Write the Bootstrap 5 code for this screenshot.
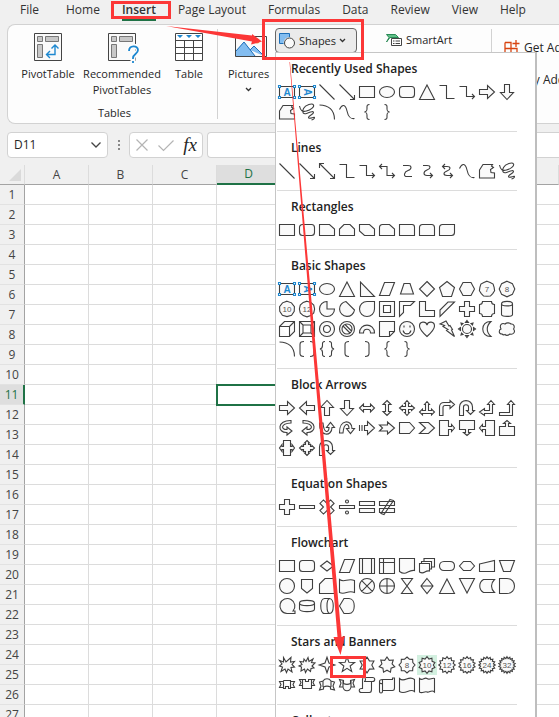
<!DOCTYPE html>
<html lang="en">
<head>
<meta charset="utf-8">
<meta name="viewport" content="width=device-width, initial-scale=1">
<title>Spreadsheet – Insert shapes</title>
<link href="https://cdn.jsdelivr.net/npm/bootstrap@5.3.0/dist/css/bootstrap.min.css" rel="stylesheet">
<style>
  :root { --ink:#262626; --chrome:#f0f0f0; --rule:#d2d2d2; --green:#1f7246; --blue:#1e88d0; --note:#fc3737; }
  body { font-family:"Open Sans","Noto Sans",sans-serif; font-size:11px; line-height:16px; color:var(--ink); background:var(--chrome); height:100vh; overflow:hidden; }
  button { color:inherit; background:none; border:0; padding:0; }
  svg { display:block; overflow:visible; }
  .tabs { height:24px; padding-left:20px; gap:22px; font-size:12px; line-height:20px; }
  .tabs a { color:#333; text-decoration:none; height:21px; white-space:nowrap; }
  .tabs a:first-child { margin-right:5px; }
  .tabs a.current { font-weight:600; border-bottom:2px solid var(--green); }
  .ribbon { margin-left:7px; height:100px; background:#fdfdfd; border:1px solid var(--rule); border-right:0; border-radius:8px 0 0 8px; }
  .group-tables { width:209px; }
  .tools { padding:8px 0 0 13px; height:80px; }
  .tool { display:flex; flex-direction:column; align-items:center; gap:5px; text-align:center; }
  .tool-a { width:54px; } .tool-b { width:94px; } .tool-c { width:40px; }
  .rule { width:1px; height:90px; margin-top:4px; background:var(--rule); }
  .group-pics { width:57px; padding:8px 0 0 10px; }
  .shapes-btn { width:82px; height:25px; margin-top:3px; padding:0 6px 0 3px; gap:3px; border:1px solid #666; border-radius:4px; background:#ebebeb; }
  .smart { width:134px; padding:7px 0 0 29px; }
  .smart button { gap:3px; }
  .addins { padding:15px 0 0 12px; white-space:nowrap; font-size:12px; gap:16px; }
  .addins button { gap:4px; }
  .addins span { padding-left:19px; }
  .formula { padding:8px 0 7px 7px; height:41px; }
  .field { height:26px; background:#fff; border:1px solid var(--rule); border-radius:4px; }
  .namebox { width:101px; padding:0 6px; }
  .namebox input { width:70px; border:0; outline:0; padding:0; font-size:12px; color:var(--ink); background:transparent; }
  .dots { width:21px; }
  .fx { width:74px; margin-right:4px; padding:0 5px 0 6px; }
  .fx-text { font:italic 19px/22px "Liberation Serif",serif; }
  .bar { border-right:0; border-radius:4px 0 0 4px; outline:0; min-width:0; }
  .sheet { table-layout:fixed; width:100%; border-collapse:separate; border-spacing:0; font-size:12px; line-height:18px; color:#444; }
  .sheet th, .sheet td { height:20px; padding:0; font-weight:400; text-align:center; }
  .sheet tbody th { padding-top:1px; }
  .sheet col { width:64px; } .sheet col.nums { width:25px; } .sheet col.rest { width:auto; }
  .sheet td { background:#fff; border-right:1px solid #dcdcdc; border-bottom:1px solid #dcdcdc; }
  .sheet td:last-child { border-right:0; }
  .sheet thead th { border-bottom:1px solid #a3a3a3; border-right:1px solid #dcdcdc; }
  .sheet tbody th { border-right:1px solid #a3a3a3; border-bottom:1px solid #e2e2e2; }
  .sheet thead th.on { background:#dedede; color:var(--green); border-bottom:2px solid var(--green); }
  .sheet tbody th.on { background:#dedede; color:var(--green); border-right:2px solid var(--green); }
  .sheet td.on { outline:2px solid var(--green); position:relative; outline-offset:-1px; }
  .gallery { position:absolute; left:275px; top:52px; width:262px; bottom:-30px; background:#fff; padding-left:1px; border:1px solid #c6c6c6; border-right:2px solid #bebebe; z-index:2; overflow:hidden; }
  .gallery section { width:240px; border-bottom:1px solid #dcdcdc; padding-bottom:9px; }
  .gallery h2 { margin:0; padding:6px 0 3px 14px; font-size:12px; line-height:20px; font-weight:600; color:#222; white-space:nowrap; }
  .gallery button { width:20px; height:20px; padding:1px; }
  .gallery button.hot { background:#d3f0e0; }
  .gallery svg { width:18px; height:18px; fill:#fafafa; stroke:#3f3f3f; stroke-width:1.1; }
  .gallery .open { fill:none; }
  .gallery text { fill:#555; stroke:none; font:8px "Liberation Sans",sans-serif; text-anchor:middle; }
  .gallery .tb .grip { fill:#fff; stroke:var(--blue); }
  .gallery .tb text { fill:var(--blue); font-weight:700; font-size:10px; }
  .notes { position:absolute; left:0; top:0; z-index:3; pointer-events:none; }
</style>
</head>
<body class="d-flex flex-column position-relative">
<nav class="tabs d-flex flex-shrink-0">
  <a href="#">File</a><a href="#">Home</a><a href="#" class="current">Insert</a><a href="#">Page Layout</a><a href="#">Formulas</a><a href="#">Data</a><a href="#">Review</a><a href="#">View</a><a href="#">Help</a>
</nav>

<div class="ribbon d-flex flex-shrink-0 overflow-hidden">
  <div class="group-tables flex-shrink-0">
    <div class="tools d-flex">
      <button class="tool tool-a"><svg width="28" height="28" fill="none" stroke="#444"><path fill="#fafafa" d="M.5.5h27v27H.5z"/><path fill="#c8c8c8" stroke="#777" d="M3.5 3.5h5v5h-5zM11.500 3.500h13v5h-13zM3.500 11.500h5v13h-5z"/><path stroke="#1e88d0" stroke-width="1.4" d="M13 21.500h8V12M16 18l-3.500 3.500L16 25M17.500 15.500L21 12l3.500 3.500"/></svg>PivotTable</button>
      <button class="tool tool-b"><svg width="28" height="28" fill="none" stroke="#444"><path fill="#fafafa" d="M.5.5h27v27H.5z"/><path fill="#c8c8c8" stroke="#777" d="M3.500 3.500h5v5h-5zM11.500 3.500h13v5h-13zM3.500 11.500h5v13h-5z"/><path stroke="#fdfdfd" stroke-width="5" d="M21 18c0-6 9-6 9-1 0 4-5 4-5 8v5"/><path stroke="#1e88d0" stroke-width="1.800" d="M21 18c0-6 9-6 9-1 0 4-5 4-5 8v1M25 28v2"/></svg>Recommended<br>PivotTables</button>
      <button class="tool tool-c"><svg width="28" height="28" fill="none" stroke="#444"><path fill="#fff" d="M.5.5h27v27H.5z"/><path d="M.500 7.500h27M.500 14.500h27M.500 20.500h27M9.500 7.500v20M18.500 7.500v20"/><path fill="#1e88d0" stroke="none" d="M2 2h6L5 5zM11 2h6l-3 3zM20 2h6l-3 3z"/></svg>Table</button>
    </div>
    <div class="text-center ps-1">Tables</div>
  </div>
  <div class="rule flex-shrink-0"></div>
  <div class="group-pics flex-shrink-0">
    <button class="tool"><svg width="28" height="28"><path fill="#fafafa" stroke="#444" d="M.500 3.500h31v20H.500z"/><circle cx="22" cy="8" r="2.500" fill="#f0913a"/><path fill="#83bdf0" d="M1 18l8-9 11 14H1z"/><path fill="#83bdf0" stroke="#1e6fb8" d="M1 18l8-9 11 14M15 17l4-4 10 10"/></svg>Pictures<svg width="7" height="5" fill="none" stroke="#333" stroke-width="1.300"><path d="M1 1l2.500 2.500L6 1"/></svg></button>
  </div>
  <button class="shapes-btn d-flex align-items-center flex-shrink-0"><svg width="17" height="16"><path fill="#83bdf0" stroke="#1e6fb8" d="M.500.500h10v10H.500z"/><circle cx="10.500" cy="10" r="6" fill="#ebebeb"/><circle cx="10.500" cy="10" r="5" fill="#fafafa" stroke="#444"/></svg>Shapes<svg width="7" height="5" fill="none" stroke="#333" stroke-width="1.300"><path d="M1 1l2.500 2.500L6 1"/></svg></button>
  <div class="smart flex-shrink-0"><button class="d-flex align-items-center"><svg width="17" height="14"><path fill="#5fbf87" stroke="#2b8a57" d="M.500 1.500h9l3 3H4L.500 9 3 4.500z"/><path fill="#fff" stroke="#444" d="M5.500 5.500h10v7h-10z"/><path stroke="#444" d="M7 8h1.500M9.500 8H14M7 10.500h1.500M9.500 10.500H14"/></svg>SmartArt</button></div>
  <div class="rule flex-shrink-0"></div>
  <div class="addins d-flex flex-column"><button class="d-flex align-items-center"><svg width="16" height="16" fill="none" stroke="#d8430f" stroke-width="1.300"><path d="M1 2.500h6v12M1 2.500v12h12v-6H1M12 0v7M8.500 3.500h7"/></svg>Get Add-ins</button><button class="d-flex"><span>My Add-ins</span></button></div>
</div>

<div class="formula d-flex flex-shrink-0">
  <div class="field namebox d-flex align-items-center justify-content-between flex-shrink-0"><input aria-label="Name box" value="D11"><svg width="10" height="6" fill="none" stroke="#444" stroke-width="1.300"><path d="M.500.500L5 5 9.500.500"/></svg></div>
  <div class="dots d-flex align-items-center justify-content-center flex-shrink-0"><svg width="2" height="11" fill="#888"><path d="M0 0h2v2H0zM0 4h2v2H0zM0 8h2v2H0z"/></svg></div>
  <div class="field fx d-flex align-items-center justify-content-between flex-shrink-0">
    <button aria-label="Cancel"><svg width="12" height="12" stroke="#b4b4b4" stroke-width="1.200"><path d="M.500.500l11 11M11.500.500l-11 11"/></svg></button>
    <button aria-label="Enter"><svg width="16" height="11" fill="none" stroke="#b4b4b4" stroke-width="1.200"><path d="M.500 5.500l5 5L15.500.500"/></svg></button>
    <button class="fx-text">fx</button>
  </div>
  <input class="field bar flex-grow-1" aria-label="Formula">
</div>

<table class="sheet flex-shrink-0">
  <colgroup><col class="nums"><col><col><col><col><col><col><col><col><col class="rest"></colgroup>
  <thead><tr><th><svg width="24" height="18"><path d="M21 3v12H9z" fill="#dadada"/></svg></th><th>A</th><th>B</th><th>C</th><th class="on">D</th><th></th><th></th><th></th><th></th><th></th></tr></thead>
  <tbody id="rows"></tbody>
</table>

<div class="gallery" role="menu">
  <section><h2>Recently Used Shapes</h2><div class="d-flex flex-wrap" data-shapes="tb tbv line lineA rect oval round tri elbow elbowA arrow arrow/90 free scrib arc wave brace brace/180"></div></section>
  <section><h2>Lines</h2><div class="d-flex flex-wrap" data-shapes="line lineA lineAA elbow elbowA elbowAA curve curveA curveAA wave free scrib"></div></section>
  <section><h2>Rectangles</h2><div class="d-flex flex-wrap" data-shapes="rect round snip1 snip2 snipD snipR rnd1 rnd2 rndD"></div></section>
  <section><h2>Basic Shapes</h2><div class="d-flex flex-wrap" data-shapes="tb tbv oval tri rtri para trap diam pent hex n7 n8 n10 n12 pie chord tear frame half ell stripe plus plaque can cube bevel donut no barc fold smile heart bolt sun moon cloud arc brk2 brc2 brk brk/180 brace brace/180"></div></section>
  <section><h2>Block Arrows</h2><div class="d-flex flex-wrap" data-shapes="arrow arrow/180 arrow/270 arrow/90 lr lr/90 quad lru bent uturn leftup bentup curlR curlL swoopU swoop strip notch penta chev call call/90 call/180 call/270 callLR callQ uturn"></div></section>
  <section><h2>Equation Shapes</h2><div class="d-flex flex-wrap" data-shapes="plus minus plus/45 div eq neq"></div></section>
  <section><h2>Flowchart</h2><div class="d-flex flex-wrap" data-shapes="rect round fdiam para pre inter doc docs term fhex minp mop circ off card tape sumj or coll sort tri tri/180 stored delay seq disk drum disp"></div></section>
  <section><h2>Stars and Banners</h2><div class="d-flex flex-wrap" data-shapes="ex1 ex2 s4 s5 s6 s7 k8 k10 k12 k16 k24 k32 rib1 rib2 rib3 rib4 scrV scrH wav1 wav2"></div></section>
  <section><h2>Callouts</h2></section>
</div>

<svg class="notes" width="559" height="717" fill="none" stroke="#fc3737" stroke-width="3" aria-hidden="true">
  <path d="M112.500 2.500h57v15h-57zM263.500 20.500h99v38h-99zM331.500 657.500h33v19h-33z"/>
  <path fill="#fc3737" stroke="none" d="M166 26l86 9.500 0-1.500 10 7.500-11 3 1-3zM289.500 62l.500 0 27 300L341.500 637l3.500-1-4.500 19-7-18 4 0L314 362z"/>
</svg>

<script>
// Closed polygon with n spikes alternating between radii R and r around the icon centre.
function star(n, R, r) {
  let d = '';
  for (let i = 0; i < 2 * n; i++) {
    const a = Math.PI * i / n - Math.PI / 2, q = i % 2 ? r : R;
    d += (i ? 'L' : 'M') + (9 + q * Math.cos(a)).toFixed(2) + ' ' + (9 + q * Math.sin(a)).toFixed(2);
  }
  return d + 'z';
}
const circle = r => `M${9 - r} 9a${r} ${r} 0 1 0 ${2 * r} 0a${r} ${r} 0 1 0-${2 * r} 0z`;
// Paths in an 18-unit box; a leading ~ marks an unfilled line.
const shapes = {
  line:'~M1.5 1.5l15 15', lineA:'~M1.5 1.5l15 15M16.5 12v4.500H12', lineAA:'~M1.5 1.5l15 15M16.5 12v4.500H12M6 1.500H1.500V6',
  rect:'M1.5 3.5h15v11h-15z', oval:'M1.5 9a7.500 5.500 0 1 0 15 0a7.500 5.500 0 1 0-15 0z',
  round:'M4.500 3.500h9a3 3 0 0 1 3 3v5a3 3 0 0 1-3 3h-9a3 3 0 0 1-3-3v-5a3 3 0 0 1 3-3z',
  tri:'M9 2l7.500 14.500h-15z', elbow:'~M1.500 2.500h7v13h8', elbowA:'~M1.500 3.500h7v10h8M14 11l2.500 2.500L14 16',
  elbowAA:'~M2 4.500h7v9h7.500M14 11l2.500 2.500L14 16M4 2L1.500 4.500 4 7',
  arrow:'M1.500 6.500h8v-4l7 6.500-7 6.500v-4h-8z', free:'M1.500 8L5 2.500h9.500L13.500 4l2 1.500-3 2 .500 3 3.500.500v5h-15z',
  scrib:'~M1.500 3c1 5 3 6 7 5s8-4 7-6-8-.500-10 3.500 0 6 3 5 7-3 7-1-5 3-5 5 6-1 6 0-1 2-3 2.500', arc:'~M1.500 2c9 0 15 5 15 14.500',
  wave:'~M1.500 6.500C4 1 7.500 1 9 8s4 8 7.500 7.500', brace:'~M11.500 1.500c-3 0-2.500 2-2.500 4s0 3-2.500 3.500c2.500.5 2.500 1.500 2.500 3.500s-.5 4 2.500 4',
  curve:'~M5 3.500h5c4 0 4 3.500 0 5s-5 6-1 6h5', curveA:'~M5 3.500h4c4 0 4 3 0 4.500s-4 5.500 0 5.500h5M12 11l2.500 2.500L12 16',
  curveAA:'~M5 4.500h4c4 0 4 3 0 4.500s-4 4.500 0 4.500h5M12 11l2.500 2.500L12 16M7 2L4.500 4.500 7 7',
  snip1:'M1.500 3.500h10l5 4.500v6.500h-15z', snip2:'M1.500 14.500V8L6 3.500h6L16.500 8v6.500z', snipD:'M1.500 3.500h10l5 4.500v6.500h-10l-5-4.500z',
  snipR:'M4.500 3.500h7l5 4.500v6.500h-15v-8a3 3 0 0 1 3-3z', rnd1:'M1.500 3.500h12.500a2.500 2.500 0 0 1 2.500 2.500v8.500h-15z',
  rnd2:'M4.500 3.500h9a3 3 0 0 1 3 3v8h-15v-8a3 3 0 0 1 3-3z', rndD:'M4.500 3.500h12v8a3 3 0 0 1-3 3h-12v-8a3 3 0 0 1 3-3z',
  rtri:'M2.500 2v14.500h14z', para:'M6.500 2.500h10l-5 13h-10z', trap:'M6 3.500h6l3.500 10.500h-13z', diam:'M9 1.500l7.500 7.500L9 16.500 1.500 9z',
  pent:'M9 1.500l7.500 6-3 9h-9l-3-9z', hex:'M5 2.500h8L16.500 9 13 15.500H5L1.500 9z',
  pie:'M9 1.500a7.500 7.500 0 1 0 7.500 7.500H9z', chord:'M8 1.500a7.500 7.500 0 1 0 8.500 8.500z', tear:'M16.500 1.500v7.500A7.500 7.500 0 1 1 9 1.500z',
  frame:'M1.500 1.500h15v15h-15zM5.500 5.500h7v7h-7z', half:'M1.500 1.500h15l-4 4h-7v7l-4 4z', ell:'M1.500 1.500h6v9h9v6h-15z', stripe:'M10 2h6.500L2 16.500V10z',
  plus:'M6.500 1.500h5v5h5v5h-5v5h-5v-5h-5v-5h5z', plaque:'M4.500 1.500h9c0 2 1 3 3 3v9c-2 0-3 1-3 3h-9c0-2-1-3-3-3v-9c2 0 3-1 3-3z',
  can:'M3.500 4c0-3.500 11-3.500 11 0v10.500c0 2.500-11 2.500-11 0zM3.500 4c0 2.500 11 2.500 11 0', cube:'M1.500 6.500l5-5h10v10l-5 5h-10zM1.500 6.500h10v10M11.500 6.500l5-5',
  bevel:'M1.500 1.500h15v15h-15zM5 5h8v8H5zM1.500 1.500L5 5M16.500 1.500L13 5M16.500 16.500L13 13M1.500 16.500L5 13',
  donut:circle(7.5) + circle(3.5), no:circle(7.5) + circle(5) + 'M5 6l7 7M7 4.500l6.500 6.500', barc:'M1.500 13c0-10.500 15-10.500 15 0h-4c0-5-7-5-7 0z',
  fold:'M1.500 1.500h15v10l-5 5h-10zM11.500 16.500v-5h5', smile:circle(7.5) + 'M5 10.500c1.500 4.500 6.500 4.500 8 0M6 5.500v2M12 5.500v2',
  heart:'M9 16.500C4 12 1.500 9 1.500 6 1.500 1 8 1 9 5c1-4 7.500-4 7.500 1 0 3-2.500 6-7.500 10.500z', bolt:'M2 4l6-3 3 5 1-.500 2.500 4-1 .5 3 6.500-8-6 1.500-1-5-3 1.500-1z',
  sun:circle(4.500) + 'M9 .500l1.500 2h-3zM9 17.500l1.500-2h-3zM.500 9l2-1.500v3zM17.500 9l-2-1.500v3zM3 3l2 .500-1.500 1.500zM15 3l-2 .500 1.500 1.500zM3 15l2-.500-1.500-1.500zM15 15l-2-.500 1.500-1.500z',
  moon:'M13 1.500C2 1 2 17 13 16.500 8 12 8 6 13 1.500z', cloud:'M4 14c-4 0-3-4.500-1-5-2-4 1-6.500 4-5 2-2 5-1 6 0 3-.500 4 3 2.500 5 2.500 3-.500 6-3.500 5-2 1.500-4 1.500-5 .500-1 .500-2 .500-3-.500z',
  brk2:'~M6 1.500c-3 0-4 1-4 3v9c0 2 1 3 4 3M12 1.500c3 0 4 1 4 3v9c0 2-1 3-4 3', brc2:'~M7 1.500c-3 0-2.500 2-2.500 4S4 8.500 2 9c2 .5 2.500 1.500 2.500 3.500s-.5 4 2.500 4M11 1.500c3 0 2.500 2 2.500 4s.5 3 2.500 3.500c-2 .5-2.500 1.500-2.500 3.500s.5 4-2.500 4',
  brk:'~M11 1.500c-3 0-4 1-4 3v9c0 2 1 3 4 3',
  lr:'M1.500 9l4-4v2.500h7V5l4 4-4 4v-2.500h-7V13z', quad:'M9 1.500L11.500 4.500h-1v3h3v-1L16.500 9l-3 2.500v-1h-3v3h1L9 16.500l-2.500-3h1v-3h-3v1L1.500 9l3-2.500v1h3v-3h-1z',
  lru:'M9 2.500l2.500 3h-1v6h3v-1.500l3 3-3 3v-1.500h-9V16l-3-3 3-3v1.500h3v-6h-1z', bent:'M1.500 16.500V8c0-3 2-4.500 4.500-4.500h6v-2l4.500 4-4.500 4V6.500H7C5.500 6.500 5 7 5 8.500v8z',
  uturn:'M1.500 16.500V8c0-8.500 13-8.500 13 0v3.500h2l-4 4-4-4h2V8c0-3-5-3-5 0v8.500z', leftup:'M13 1.500l3.500 4h-2v9h-8v2l-5-3.500 5-3.500v2h5v-6h-2z', bentup:'M13 1.500l3.500 4h-2v11h-13v-3h10v-8h-2z',
  curlR:'M13 1.500C-1 1-1 14 9 13.500V16l5-4-5-4v2.500C3 11 2 4.500 13 4z', curlL:'M5 1.500C19 1 19 14 9 13.500V16l-5-4 5-4v2.500C15 11 16 4.500 5 4z',
  swoop:'M1.500 14C1 0 14 0 14 9.500h2.500l-4 5-4-5H11C11 4 6 3 5 14z', swoopU:'M1.500 4C1 18 14 18 14 8.500h2.500l-4-5-4 5H11C11 14 6 15 5 4z',
  strip:'M6.500 6.500h3v-4l7 6.500-7 6.500v-4h-3zM1.500 6v6M4 6v6', notch:'M1.500 6h8V3l7 6-7 6v-3h-8l3-3z', penta:'M1.500 3.500h10L16.500 9l-5 5.500h-10z', chev:'M1.500 3.500h9l6 5.500-6 5.500h-9L7.500 9z',
  call:'M1.500 1.500h9v6h3v-2l3 3.500-3 3.500v-2h-3v6h-9z', callLR:'M5.500 1.500h7v6h1.500v-2L16.500 9 14 12.500v-2h-1.500v6h-7v-6H4v2L1.500 9 4 5.500v2h1.500z',
  callQ:'M9 1.500l2.500 2.500h-1v1.500h2v2H14v-1L16.500 9 14 11.500v-1h-1.500v2h-2V14h1L9 16.500 6.500 14h1v-1.500h-2v-2H4v1L1.500 9 4 6.500v1h1.500v-2h2V4h-1z',
  minus:'M1.500 7.500h15v3h-15z', div:'M1.500 7.500h15v3h-15zM7.500 3.500a1.500 1.500 0 1 0 3 0 1.500 1.500 0 1 0-3 0zM7.500 14.500a1.500 1.500 0 1 0 3 0 1.500 1.500 0 1 0-3 0z', eq:'M1.500 3.500h15v4h-15zM1.500 10.500h15v4h-15z',
  neq:'M1.500 3.500h15v4h-15zM1.500 10.500h15v4h-15zM12 1.500l3.500 1L6 16.500l-3-1z', fdiam:'M9 4l6.500 5L9 14 2.500 9z', pre:'M1.500 1.500h15v15h-15zM4.500 1.500v15M13.500 1.500v15', inter:'M1.500 1.500h15v15h-15zM5.500 1.500v15M1.500 5.500h15',
  doc:'M1.500 1.500h15v12c-7-1-8 6-15 1z', docs:'M1.500 6.500h10v7.500c-5-1-5 4-10 1zM3.500 6V4.500h10V12h-1.500M6 4V1.500h10.500V10H14', term:'M6 4.500h6c6 0 6 9 0 9H6c-6 0-6-9 0-9z', fhex:'M5.500 4.500h7l4 4.500-4 4.500h-7L1.500 9z',
  minp:'M1.500 7l15-3.500v11h-15z', mop:'M1.500 3.500h15l-4 11h-7z', circ:circle(7.5), off:'M3.500 2.500h11v9L9 16l-5.500-4.500z', card:'M7 1.500h9.500v15h-15V7z', tape:'M1.500 2.500c5 4 8-2 15 1v12c-7-3-9 3-15 0z',
  sumj:circle(7.5) + 'M3.700 3.700l10.600 10.600M14.300 3.700L3.700 14.300', or:circle(7.5) + 'M9 1.500v15M1.500 9h15', coll:'M3.500 1.500h11l-11 15h11z', sort:'M9 1.500l6 7.500-6 7.500L3 9zM3 9h12',
  stored:'M5.500 2.500h11c-4 4-4 9 0 13h-11c-5-3-5-10 0-13z', delay:'M1.500 1.500H9c10 0 10 15 0 15H1.500z', seq:'M15 14h2v2.500H9A7.500 7.500 0 1 1 15 14z', disk:'M1.500 6c0-3.500 15-3.500 15 0v6c0 3.500-15 3.500-15 0zM1.500 6c0 3.500 15 3.500 15 0', drum:'M6.500 1.500h5c5 0 5 15 0 15h-5c-5 0-5-15 0-15zM12 1.500c-4 0-4 15 0 15',
  disp:'M6 1.500h5c7 0 7 15 0 15H6L1.500 9z',
  ex1:'M5.500 1.500L8 6l5-4.500-.500 4.500 4-.500-2.500 3 2.500 2.500-3.500.500 1 4.500L10 13l-1.500 3.500L7 13l-4 2.500L4.500 11l-3-1L4 8 1.500 4.500l4 1.500z', ex2:'M6 3l2 2.500 2-4 1 4L15 3l-1.500 3.500 3.500.500-3 3 2 2-3 .500-.500 3L9.500 13l-2 3.500-1-3.500-3.500 2 .500-4L1 10l3-1.500L2 5.500l3.500.500z',
  s4:star(4, 7.8, 2.8), s5:star(5, 8, 3.3), s6:star(6, 8, 4.800), s7:star(7, 8, 5.200),
  rib1:'M5.500 4.500h7v7h4l-1.500-3 1.500-3h-4M5.500 5.500h-4L3 8.500l-1.500 3h4v1h2v-2h3v2h2v-1M5.500 11.500v-7', rib2:'M1.500 3.500h6v2h3v-2h6L15 6.500l1.500 3h-3v3h-9v-3h-3L3 6.500zM4.500 9.500v-6M13.500 9.500v-6',
  rib3:'M5 5c2-3 6-3 8 0l3.500 1-1.500 4 1.500 4-4-1v-2c-2-1-5-1-7 0v2l-4 1L3 10 1.500 6zM5 5v6M13 5v6', rib4:'M1.500 3.500l4 1v3c2 1 5 1 7 0v-3l4-1L15 7l1.500 4H13c-1 5-7 5-8 0H1.500L3 7zM5 11V5M13 11V5',
  scrV:'M5.500 1.500h9c3 0 3 4 0 4h-1v8c0 2-1 3-2 3h-8c-3 0-3-4 0-4h1v-9c0-1 .500-2 1.500-2zM6 5.500h8M6 1.500c2 0 2 4 0 4', scrH:'M1.500 5.500c0-2 2-2 3-2h10v-1.500h2v10c0 2-1 2.500-2 2.500h-10v1c0 2-3 2-3 0zM4.500 15V7c0 1-3 1-3-1M4.500 7v-3',
  wav1:'M1.500 2.500c5 5 9-4 15 1v12c-5-4-9 4-15 0z', wav2:'M1.500 2.500c3 3 5-2 7.500 0s5-1 7.500 0V16c-3-3-5 1-7.500 0s-5 2-7.500 0z'
};
const numbered = {
  n7:star(7, 7.8, 7.3), n8:star(4, 7.8, 7.6), n10:star(5, 7.8, 7.6), n12:star(6, 7.8, 7.6),
  k8:star(8, 8, 6.300), k10:star(10, 8.300, 6.300), k12:star(12, 8.300, 6.400), k16:star(14, 8.300, 6.500), k24:star(16, 8.300, 6.500), k32:star(18, 8.300, 6.500)
};
const grips = 'M.500 2.500h2v2h-2zM15.500 2.500h2v2h-2zM.500 13.500h2v2h-2zM15.500 13.500h2v2h-2z';
function icon(key) {
  const [name, turn] = key.split('/');
  if (name === 'tb' || name === 'tbv')
    return `<svg class="tb"><path d="M1.500 3.500h15v11h-15z"/><path class="grip" d="${grips}"/><text x="9" y="12.500"${name === 'tbv' ? ' transform="rotate(90 9 9)"' : ''}>A</text></svg>`;
  if (numbered[name])
    return `<svg><path d="${numbered[name]}"/><text x="9" y="12">${name.slice(1)}</text></svg>`;
  const d = shapes[name], open = d[0] === '~';
  return `<svg${open ? ' class="open"' : ''}><path fill-rule="evenodd" d="${open ? d.slice(1) : d}"${turn ? ` transform="rotate(${turn} 9 9)"` : ''}/></svg>`;
}
document.querySelectorAll('[data-shapes]').forEach(box => {
  box.innerHTML = box.dataset.shapes.split(' ').map(k => `<button role="menuitem" aria-label="${k}"${k === 'k10' ? ' class="hot"' : ''}>${icon(k)}</button>`).join('');
});
let html = '';
for (let r = 1; r <= 27; r++) {
  html += `<tr><th${r === 11 ? ' class="on"' : ''}>${r}</th>`;
  for (let c = 1; c <= 9; c++) html += r === 11 && c === 4 ? '<td class="on"></td>' : '<td></td>';
  html += '</tr>';
}
document.getElementById('rows').innerHTML = html;
</script>
<script src="https://cdn.jsdelivr.net/npm/bootstrap@5.3.0/dist/js/bootstrap.bundle.min.js"></script>
</body>
</html>
